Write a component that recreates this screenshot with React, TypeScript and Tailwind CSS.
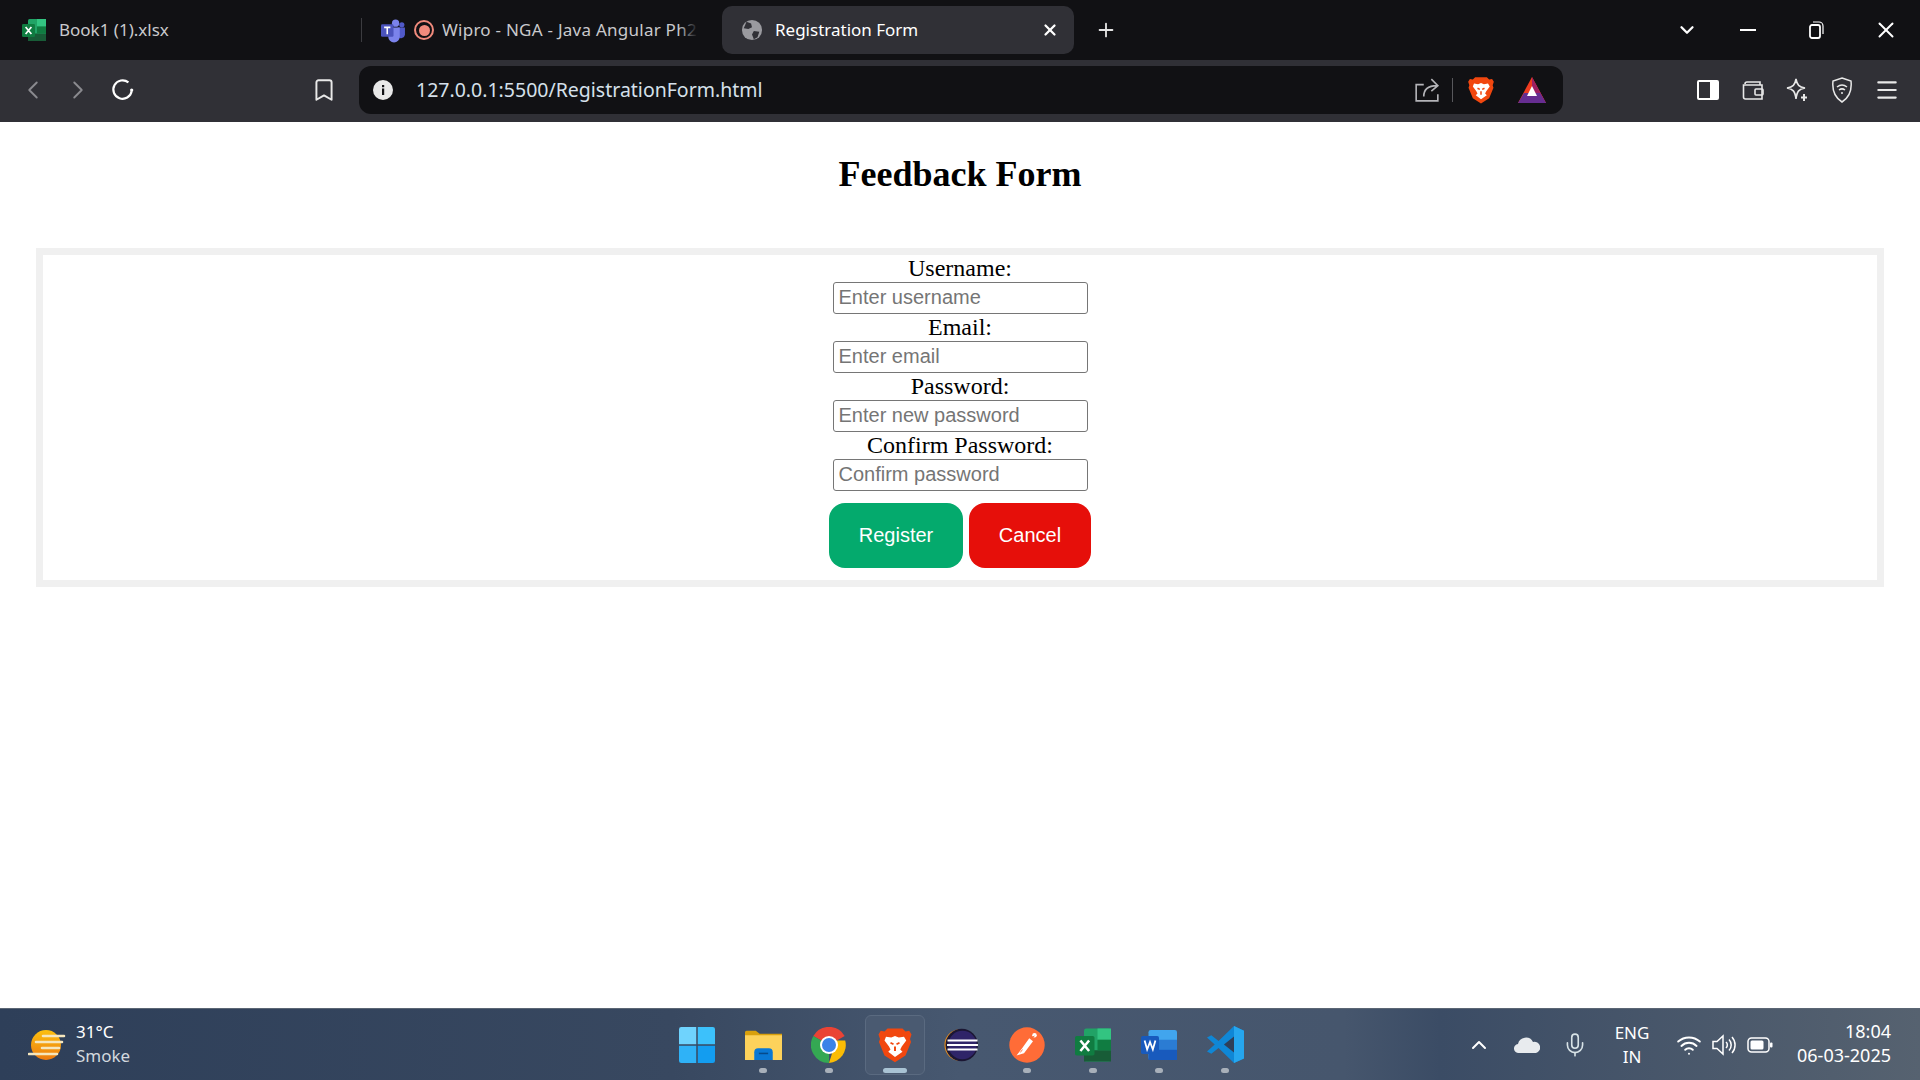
import { Bookmark, ChevronDown, ChevronLeft, ChevronRight, ChevronUp, Menu, Mic, Plus, Wifi, X } from 'lucide-react';

const fields = [
  { label: 'Username:', placeholder: 'Enter username', type: 'text' },
  { label: 'Email:', placeholder: 'Enter email', type: 'email' },
  { label: 'Password:', placeholder: 'Enter new password', type: 'password' },
  { label: 'Confirm Password:', placeholder: 'Confirm password', type: 'password' },
];

function ExcelIcon({ size = 24 }: { size?: number }) {
  return (
    <svg width={size} height={size} viewBox="0 0 24 24">
      <rect x="6" y="1" width="18" height="22" rx="1.5" fill="#21a366" />
      <rect x="15" y="1" width="9" height="7.5" fill="#33c481" />
      <rect x="6" y="15.5" width="18" height="7.5" fill="#185c37" />
      <rect x="15" y="8.5" width="9" height="7" fill="#107c41" />
      <rect x="0" y="6" width="13" height="13" rx="1.2" fill="#107c41" />
      <path d="M3.6 9l5.800 7M9.400 9l-5.800 7" stroke="#fff" strokeWidth="1.700" fill="none" />
    </svg>
  );
}

function WordIcon() {
  return (
    <svg width="36" height="36" viewBox="0 0 24 24">
      <rect x="5" y="2" width="19" height="20" rx="1.500" fill="#41a5ee" />
      <rect x="5" y="8.500" width="19" height="6.500" fill="#2b7cd3" />
      <rect x="5" y="15" width="19" height="7" fill="#185abd" />
      <rect x="0" y="6" width="12" height="12" rx="1.200" fill="#185abd" />
      <path d="M2.400 9l1.700 6 1.900-5 1.900 5 1.700-6" stroke="#fff" strokeWidth="1.200" fill="none" />
    </svg>
  );
}

function TeamsIcon() {
  return (
    <svg width="25" height="25" viewBox="0 0 24 24">
      <circle cx="14" cy="5" r="3.500" fill="#7b83eb" />
      <circle cx="20" cy="6.500" r="2.500" fill="#5059c9" />
      <path d="M16 9h7v7a4 4 0 0 1-7 2z" fill="#5059c9" />
      <path d="M7 9h11v9a5 5 0 0 1-11 0z" fill="#7b83eb" />
      <rect x="0" y="6" width="12" height="12" rx="1.200" fill="#4b53bc" />
      <path d="M3 9h6M6 9v6.500" stroke="#fff" strokeWidth="1.500" />
    </svg>
  );
}

function BraveIcon({ size = 24 }: { size?: number }) {
  return (
    <svg width={size} height={size} viewBox="0 0 24 24">
      <path d="M7 1h10l2 2 2.500-.5L23 5l-1 3 .7 2-3.700 9-7 4.500L5 19 1.300 10 2 8 1 5l1.500-2.500L5 3z" fill="#f1470f" />
      <path d="M6 6.500l3.500.5L12 6l2.500 1 3.500-.5 1.500 2.500-3 4-1 2 1.500 1.500L12 20l-4.500-3.500L9 15l-1-2-3-4z" fill="#fff" />
      <path d="M9 10.500l2 1M15 10.500l-2 1M12 13v3" stroke="#f1470f" strokeWidth="1.300" />
    </svg>
  );
}

function ChromeIcon() {
  return (
    <svg width="36" height="36" viewBox="2 2 20 20">
      <path d="M12 12L3.300 7A10 10 0 0 1 20.700 7z" fill="#ea4335" />
      <path d="M12 12L3.300 7A10 10 0 0 0 12 22z" fill="#34a853" />
      <path d="M16 9.500h5A10 10 0 0 1 12 22z" fill="#fbbc04" />
      <circle cx="12" cy="12" r="5" fill="#fff" />
      <circle cx="12" cy="12" r="3.900" fill="#3b82e8" />
    </svg>
  );
}

function FolderIcon() {
  return (
    <svg width="37" height="37" viewBox="0 0 24 24">
      <path d="M0 4a1 1 0 0 1 1-1h6l2.500 2H24v3H0z" fill="#d9a00c" />
      <path d="M0 6h24v16H0z" fill="#fdd25b" />
      <path d="M6 22v-5a2.500 2.500 0 0 1 2.500-2.500h7A2.500 2.500 0 0 1 18 17v5z" fill="#0a78d4" />
      <rect x="9" y="17.300" width="6" height="1" fill="#064a8a" />
    </svg>
  );
}

function WindowsIcon() {
  return (
    <svg width="36" height="36" viewBox="0 0 24 24">
      <path d="M0 1.500A1.500 1.500 0 0 1 1.500 0h10v11.500H0z" fill="#6fd3fd" />
      <path d="M12.500 0h10A1.500 1.500 0 0 1 24 1.500v10H12.500z" fill="#3cc1fb" />
      <path d="M0 12.500h11.500V24h-10A1.500 1.500 0 0 1 0 22.500z" fill="#2fb2f7" />
      <path d="M12.500 12.500H24v10a1.500 1.500 0 0 1-1.500 1.500h-10z" fill="#139df0" />
    </svg>
  );
}

function EclipseIcon() {
  return (
    <svg width="36" height="36" viewBox="0 0 24 24">
      <circle cx="11.500" cy="12" r="10.500" fill="#f2941a" />
      <circle cx="12.500" cy="12" r="10.800" fill="#1b1633" />
      <circle cx="13" cy="12" r="9.500" fill="#2f2468" />
      <path d="M3 9h20M2.700 12h20.600M3 15h20" stroke="#fff" strokeWidth="1.200" />
    </svg>
  );
}

function PostmanIcon() {
  return (
    <svg width="36" height="36" viewBox="0 0 24 24">
      <circle cx="12" cy="12" r="11.800" fill="#ff6c37" />
      <path d="M5 19l5-1.500 6-8-2.500-2-5 7z" fill="#fff" />
      <circle cx="17" cy="5.500" r="1.500" fill="#fff" />
      <path d="M15 7l2-1M9 15l-1.500 2" stroke="#ff6c37" strokeWidth="0.600" />
    </svg>
  );
}

function VsCodeIcon() {
  return (
    <svg width="37" height="37" viewBox="0 0 24 24">
      <path d="M17.500 0L24 3v18l-6.500 3L7.500 14.300l-4.700 3.700L0 16.500 5 12 0 7.500 2.800 6l4.700 3.700z" fill="#0f87d6" />
      <path d="M17.500 0L24 3v18l-6.500 3z" fill="#26a6ee" />
      <path d="M17.500 6.800L11 12l6.500 5.200z" fill="#2f3f58" />
    </svg>
  );
}

function WeatherIcon() {
  return (
    <svg width="38" height="32" viewBox="0 0 38 32">
      <defs>
        <linearGradient id="sun" x1="0" y1="0" x2="0" y2="1">
          <stop offset="0" stopColor="#fcc00f" />
          <stop offset="1" stopColor="#ec7a10" />
        </linearGradient>
      </defs>
      <circle cx="18" cy="16" r="15" fill="url(#sun)" />
      <g stroke="#f5e6bd" strokeWidth="2.600" strokeLinecap="round">
        <path d="M15 7h21M8 13h26M14 19h17M1 25h28" />
      </g>
    </svg>
  );
}

function TaskItem({ dot = true, active = false, children }: { dot?: boolean; active?: boolean; children: React.ReactNode }) {
  return (
    <div className="relative flex h-[60px] w-[66px] items-center justify-center">
      {active && <div className="absolute inset-y-0 left-[3px] right-[3px] rounded-md border border-[#5a6a80] bg-[#4a5a71]" />}
      <div className="relative flex items-center justify-center">{children}</div>
      {dot && <div className={`absolute bottom-[2px] h-[5px] rounded-full ${active ? 'w-6 bg-[#a9c3d4]' : 'w-2 bg-[#a8b0ba]'}`} />}
    </div>
  );
}

export default function App() {
  return (
    <div className="flex h-screen w-full flex-col overflow-hidden bg-white font-['Noto_Sans',sans-serif]">
      {/* tab strip */}
      <div className="flex h-[60px] shrink-0 items-center bg-[#111114] text-[17px] text-[#c9c9cc]">
        <div className="flex w-[361px] items-center gap-[13px] pl-[22px]">
          <ExcelIcon />
          <span>Book1 (1).xlsx</span>
        </div>
        <div className="h-6 w-px bg-[#3c3c40]" />
        <div className="flex w-[360px] items-center pl-[19px]">
          <TeamsIcon />
          <span className="ml-2 flex h-5 w-5 shrink-0 items-center justify-center rounded-full border-2 border-[#f08a7c]">
            <span className="h-[11px] w-[11px] rounded-full bg-[#f08a7c]" />
          </span>
          <div className="relative ml-2 w-[256px] overflow-hidden whitespace-nowrap tracking-[0.25px]">
            Wipro - NGA - Java Angular Ph2
            <div className="absolute inset-y-0 right-0 w-5 bg-gradient-to-r from-transparent to-[#111114]" />
          </div>
        </div>
        <div className="flex h-12 w-[352px] items-center rounded-[10px] bg-[#303036] pl-[19px] pr-[15px] text-white">
          <svg width="22" height="22" viewBox="0 0 24 24">
            <circle cx="12" cy="12" r="11" fill="#9a9a9f" />
            <path d="M6 3l5 2 1 4-4 2-5-1zM14 13l6 1-2 6-4 2-2-5z" fill="#303036" />
          </svg>
          <span className="ml-3">Registration Form</span>
          <X size={18} strokeWidth={3} className="ml-auto" />
        </div>
        <Plus size={22} strokeWidth={2} className="ml-[21px] text-[#e5e5e5]" />
        <ChevronDown size={22} strokeWidth={2.500} className="ml-[559px] text-white" />
        <div className="ml-[42px] h-0.5 w-4 bg-white" />
        <svg width="16" height="18" viewBox="0 0 16 18" fill="none" stroke="#fff" strokeWidth="1.800" className="ml-[52px]">
          <rect x="2" y="4" width="10" height="13" rx="2" />
          <path d="M5 1h6a4 4 0 0 1 4 4v8" strokeWidth="1.200" />
        </svg>
        <X size={26} strokeWidth={1.800} className="ml-[49px] text-white" />
      </div>

      {/* toolbar */}
      <div className="flex h-[62px] shrink-0 items-center bg-[#303036] pb-[2px] text-white">
        <ChevronLeft size={30} strokeWidth={1.500} className="ml-[18px] text-[#8a8a8f]" />
        <ChevronRight size={30} strokeWidth={1.500} className="ml-[15px] text-[#8a8a8f]" />
        <svg width="26" height="26" viewBox="0 0 24 24" fill="none" stroke="#fff" strokeWidth="2" className="ml-[17px]">
          <path d="M20 13a8.500 8.500 0 1 1-3-8" />
          <circle cx="20" cy="12" r="1.500" fill="#fff" stroke="none" />
        </svg>
        <Bookmark size={26} strokeWidth={1.800} className="ml-[175px] text-[#e8e8e8]" />
        <div className="ml-[22px] flex h-12 w-[1204px] items-center rounded-xl bg-[#111114] pl-[14px] pr-[17px]">
          <svg width="20" height="20" viewBox="0 0 20 20">
            <circle cx="10" cy="10" r="10" fill="#e8e8e8" />
            <rect x="9" y="8.500" width="2.200" height="6.500" fill="#111114" />
            <rect x="9" y="5" width="2.200" height="2.200" fill="#111114" />
          </svg>
          <span className="ml-[23px] text-[19.500px] text-[#d5e0ea]">127.0.0.1:5500/RegistrationForm.html</span>
          <svg width="26" height="26" viewBox="0 0 24 24" fill="none" stroke="#b4b4b8" strokeWidth="1.500" className="ml-auto">
            <path d="M9 7H2v15h20v-6M9 18c0-7 4-10 12-10M16 2l6 6-6 5" />
          </svg>
          <div className="ml-[12px] h-6 w-px bg-[#58585c]" />
          <div className="ml-[14px]"><BraveIcon size={28} /></div>
          <svg width="28" height="26" viewBox="0 0 28 26" className="ml-[23px]">
            <path d="M14 0L0 26h28z" fill="#f03c1f" />
            <path d="M14 0l14 26H14z" fill="#9e1f63" />
            <path d="M0 26l6-10h16l6 10z" fill="#662d91" />
            <path d="M14 9l5 10H9z" fill="#fff" />
          </svg>
        </div>
        <svg width="22" height="20" viewBox="0 0 22 20" className="ml-[134px]">
          <rect x="1" y="1" width="20" height="18" rx="1" fill="none" stroke="#fff" strokeWidth="2" />
          <rect x="13" y="1" width="8" height="18" fill="#fff" />
        </svg>
        <svg width="24" height="24" viewBox="0 0 24 24" fill="none" stroke="#e8e8e8" strokeWidth="1.600" className="ml-[22px]">
          <path d="M4 6a2 2 0 0 1 2-2h13v3M2.500 7H21v14H4.500a2 2 0 0 1-2-2z" />
          <rect x="14" y="11" width="8" height="6" rx="1" />
        </svg>
        <svg width="24" height="26" viewBox="0 0 24 26" fill="none" stroke="#e8e8e8" strokeWidth="1.600" className="ml-[20px]">
          <path d="M11 2c1 6 3 8 9 9-6 1-8 3-9 11-1-8-3-10-9-11 6-1 8-3 9-9z" />
          <path d="M19 17v7M16 20.500h6" strokeWidth="2" />
        </svg>
        <svg width="22" height="26" viewBox="0 0 22 26" fill="none" stroke="#e8e8e8" strokeWidth="1.500" className="ml-[22px]">
          <path d="M11 1l9 3c1 9-1 16-9 21C3 20 1 13 2 4z" />
          <path d="M6 10c3-2.500 7-2.500 10 0M8 13c2-1.500 4-1.500 6 0" />
          <circle cx="11" cy="16" r="1" fill="#e8e8e8" stroke="none" />
        </svg>
        <Menu size={26} strokeWidth={2} className="ml-[21px] text-[#e8e8e8]" />
      </div>

      {/* page */}
      <div className="flex-1 bg-white font-['Liberation_Serif',serif] text-black">
        <h1 className="pt-[34px] text-center text-[36px] font-bold leading-[37px]">Feedback Form</h1>
        <form className="mx-[36px] mt-[55px] flex flex-col items-center border-[7px] border-[#f0f0f0] pb-[12px] text-[24px]">
          {fields.map((field) => (
            <div key={field.label} className="flex flex-col items-center">
              <label className="h-[27px] leading-[27px]">{field.label}</label>
              <input
                type={field.type}
                placeholder={field.placeholder}
                className="h-[32px] w-[255px] rounded-[3px] border border-[#767676] bg-white px-[5px] pb-[2px] font-['Liberation_Sans',sans-serif] text-[20px] placeholder:text-[#757575]"
              />
            </div>
          ))}
          <div className="mt-[12px] flex gap-[6px] font-['Liberation_Sans',sans-serif] text-[20px] text-white">
            <button type="button" className="h-[65px] w-[134px] rounded-[16px] bg-[#04aa6d] pb-[2px]">Register</button>
            <button type="button" className="h-[65px] w-[122px] rounded-[16px] bg-[#e60f0a] pb-[2px]">Cancel</button>
          </div>
        </form>
      </div>

      {/* taskbar */}
      <div className="flex h-[72px] shrink-0 items-center border-t border-[#5b6674] bg-[linear-gradient(to_right,#2e3f59,#384860_35%,#475870_50%,#46566d_70%,#3b4c65_75%,#566270)] text-white">
        <div className="flex w-[664px] items-center pl-[28px]">
          <WeatherIcon />
          <div className="ml-[10px] pb-[2px] text-[17px] leading-[24px]">
            <div>31°C</div>
            <div className="text-[#d3d8de]">Smoke</div>
          </div>
        </div>
        <div className="flex items-center">
          <TaskItem dot={false}><WindowsIcon /></TaskItem>
          <TaskItem><FolderIcon /></TaskItem>
          <TaskItem><ChromeIcon /></TaskItem>
          <TaskItem active><BraveIcon size={36} /></TaskItem>
          <TaskItem dot={false}><EclipseIcon /></TaskItem>
          <TaskItem><PostmanIcon /></TaskItem>
          <TaskItem><ExcelIcon size={36} /></TaskItem>
          <TaskItem><WordIcon /></TaskItem>
          <TaskItem><VsCodeIcon /></TaskItem>
        </div>
        <div className="flex flex-1 items-center pr-[29px]">
          <ChevronUp size={24} strokeWidth={2} className="ml-[209px]" />
          <svg width="26" height="18" viewBox="0 0 26 18" className="ml-[23px]">
            <path d="M5 17a4.500 4.500 0 0 1-1-9 8 8 0 0 1 15-2 5.500 5.500 0 0 1 3 11z" fill="#e8ebee" />
          </svg>
          <Mic size={26} strokeWidth={1.500} className="ml-[22px] text-[#d7e2e6]" />
          <div className="ml-[24px] w-[40px] text-center text-[17px] leading-[24px]">ENG<br />IN</div>
          <Wifi size={26} strokeWidth={1.800} className="ml-[24px]" />
          <svg width="26" height="22" viewBox="0 0 26 22" fill="none" stroke="#fff" strokeWidth="1.500" className="ml-[9px]">
            <path d="M2 7.500h4L12 2v18l-6-5.500H2z" />
            <path d="M15 8a4 4 0 0 1 0 6M18 5.500a8 8 0 0 1 0 11M21 3a12 12 0 0 1 0 16" />
          </svg>
          <svg width="26" height="16" viewBox="0 0 26 16" className="ml-[10px]">
            <rect x="1" y="1" width="21" height="14" rx="3.500" fill="none" stroke="#fff" strokeWidth="1.500" />
            <rect x="3.500" y="3.500" width="13" height="9" rx="1.500" fill="#fff" />
            <rect x="23" y="5.500" width="2.500" height="5" rx="1" fill="#fff" />
          </svg>
          <div className="ml-auto pb-[3px] text-right text-[18px] leading-[24px]">18:04<br />06-03-2025</div>
        </div>
      </div>
    </div>
  );
}
